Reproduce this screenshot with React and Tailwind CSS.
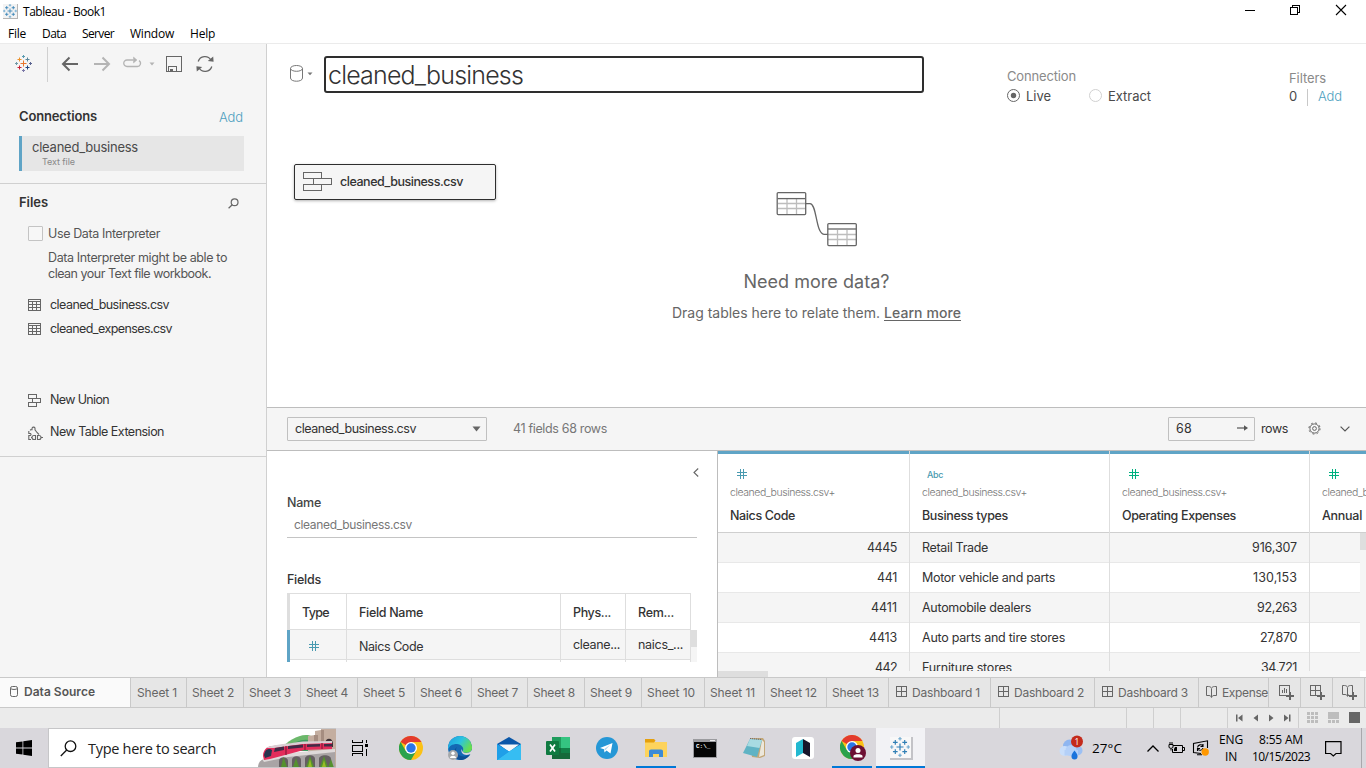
import React, { useLayoutEffect, useRef, useState } from 'react';

const SEGOE = "font-['Open_Sans','Noto_Sans',sans-serif]";

/* Single-line label whose letter spacing is computed so that it fills `w` pixels. */
function T({ w, className = '', children }) {
  const ref = useRef(null);
  const [ls, setLs] = useState(0);
  useLayoutEffect(() => {
    const natural = ref.current.getBoundingClientRect().width;
    setLs((w - natural) / String(children).length);
  }, []);
  return (
    <span ref={ref} className={`inline-block shrink-0 whitespace-pre ${className}`} style={{ letterSpacing: ls }}>
      {children}
    </span>
  );
}

function Plus({ x, y, r, c, s = 1 }) {
  return <path d={`M${x - r} ${y}H${x + r}M${x} ${y - r}V${y + r}`} stroke={c} strokeWidth={s} />;
}

function TableauMark({ size, mono, className = '' }) {
  const c = mono
    ? ['#2f7fb5', '#2f7fb5', '#2f7fb5', '#2f7fb5', '#2f7fb5', '#6ea9cf', '#6ea9cf', '#6ea9cf', '#6ea9cf']
    : ['#e8762c', '#eb912b', '#59879b', '#c72035', '#1f447e', '#5b9bb0', '#7199a6', '#7b78a8', '#5b6591'];
  return (
    <svg width={size} height={size} viewBox="0 0 17 17" fill="none" className={className}>
      <Plus x={8.5} y={8.5} r={3} c={c[0]} />
      <Plus x={4.5} y={4.5} r={2} c={c[1]} />
      <Plus x={12.5} y={4.5} r={2} c={c[2]} />
      <Plus x={4.5} y={12.5} r={2} c={c[3]} />
      <Plus x={12.5} y={12.5} r={2} c={c[4]} />
      <Plus x={8.5} y={1.5} r={1.5} c={c[5]} />
      <Plus x={1.5} y={8.5} r={1.5} c={c[6]} />
      <Plus x={8.5} y={15.5} r={1.5} c={c[7]} />
      <Plus x={15.5} y={8.5} r={1.5} c={c[8]} />
    </svg>
  );
}

function TitleBar() {
  return (
    <header className={`h-[43px] bg-white text-[12px] text-black ${SEGOE}`}>
      <div className="flex h-[24px] items-center">
        <div className="-mt-px ml-[3px] flex h-[15px] w-[15px] items-center justify-center border-r border-b border-[#b5b5b5] bg-[#f3f3f3]">
          <TableauMark size={14} mono />
        </div>
        <T w={83} className="ml-[5px]">Tableau - Book1</T>
        <svg width="110" height="22" viewBox="0 0 110 22" className="ml-auto mr-[14px] mt-[-2px]" fill="none" stroke="#000" shapeRendering="crispEdges">
          <path d="M3 10.500H13" />
          <path d="M48.500 7.500H55.500V14.500H48.500ZM50.500 7V5.500H57.500V12.500H56" />
          <path d="M94 5L104 15M104 5L94 15" shapeRendering="auto" strokeWidth="1.100" />
        </svg>
      </div>
      <nav className="flex h-5 items-center pl-2">
        <T w={18} className="mr-4">File</T>
        <T w={24} className="mr-4">Data</T>
        <T w={32} className="mr-4">Server</T>
        <T w={44} className="mr-4">Window</T>
        <T w={25}>Help</T>
      </nav>
    </header>
  );
}

function GridIcon() {
  return (
    <svg width="14" height="12" viewBox="0 0 14 12" fill="none" stroke="#666" shapeRendering="crispEdges">
      <path d="M.5 .5H12.5V11.5H.5ZM0 2.5H13M0 5.5H13M0 8.5H13M4.5 3V12M8.5 3V12" />
    </svg>
  );
}

function Sidebar() {
  return (
    <aside className="flex w-[267px] shrink-0 flex-col border-r border-[#d0d0d0] bg-[#f5f5f5] text-[12.5px] text-[#333]">
      <div className="flex h-[40px] items-center">
        <TableauMark size={17} className="-mt-px ml-[15px]" />
        <div className="ml-[15px] h-[35px] w-px bg-[#d0d0d0]" />
        <svg width="18" height="16" viewBox="0 0 18 16" fill="none" stroke="#666" strokeWidth="2" className="ml-[13px]">
          <path d="M17 8H2.5M8.5 1.5L2 8L8.5 14.5" />
        </svg>
        <svg width="18" height="16" viewBox="0 0 18 16" fill="none" stroke="#b4b4b4" strokeWidth="2" className="ml-[14px]">
          <path d="M1 8H15.5M9.5 1.5L16 8L9.5 14.5" />
        </svg>
        <svg width="20" height="14" viewBox="0 0 20 14" fill="none" stroke="#b4b4b4" strokeWidth="1.3" className="-mt-[2px] ml-[11px]">
          <path d="M11.500 4H5A3.200 3.200 0 0 0 5 10.500H15A3.200 3.200 0 0 0 17 4.600" />
          <path d="M11.500 1L15 4L11.500 7Z" fill="#b4b4b4" strokeWidth=".5" />
        </svg>
        <svg width="6" height="4" className="ml-[7px]"><path d="M.5 .5H5.5L3 3.5Z" fill="#b4b4b4" /></svg>
        <svg width="16" height="16" viewBox="0 0 16 16" fill="none" stroke="#666" shapeRendering="crispEdges" className="ml-[11px]">
          <path d="M.5 .5H15.5V15.5H.5ZM2.500 15V10.500H10.500V15" />
          <path d="M5.500 15V12.500" strokeWidth="3" />
        </svg>
        <svg width="18" height="18" viewBox="0 0 18 18" fill="none" stroke="#666" strokeWidth="1.300" className="ml-[14px] -mt-px">
          <path d="M2.200 6.500A7 7 0 0 1 15 5.200M15.800 11.500A7 7 0 0 1 3 12.800" />
          <path d="M11.800 6L17.600 6.800L17.200 1.600ZM6.200 12L.4 11.200L.8 16.400Z" fill="#666" stroke="none" />
        </svg>
      </div>

      <section className="h-[100px] border-b border-[#d0d0d0] px-[19px]">
        <div className="mt-[24px] flex h-[18px] items-center justify-between pr-[4px]">
          <T w={78} className="text-[13px] font-semibold">Connections</T>
          <T w={24} className="mt-[2px] text-[13px] font-light text-[#4e9fc0]">Add</T>
        </div>
        <div className="mt-[10px] flex h-[35px] w-[225px] flex-col items-start border-l-[3px] border-[#5fa4c6] bg-[#e6e6e6] pl-[10px] leading-none">
          <T w={106} className="mt-[4px] text-[13px] leading-[14px] text-[#4a4a4a]">cleaned_business</T>
          <T w={33} className="ml-[10px] mt-[3px] text-[9px] leading-[10px] text-[#888]">Text file</T>
        </div>
      </section>

      <section className="h-[273px] border-b border-[#d0d0d0]">
        <div className="mt-[10px] flex h-[18px] items-center justify-between pl-[19px] pr-[27px]">
          <T w={29} className="text-[13px] font-semibold">Files</T>
          <svg width="11" height="11" viewBox="0 0 11 11" fill="none" stroke="#666" strokeWidth="1.2">
            <circle cx="6.6" cy="4.2" r="3.4" /><path d="M4.2 6.7L.6 10.2" />
          </svg>
        </div>
        <div className="ml-[28px] mt-[14px] flex h-[16px] items-center text-[#555]">
          <div className="-mt-px h-[15px] w-[15px] rounded-[1px] border border-[#c4c4c4] bg-[#f7f7f7]" />
          <T w={112} className="ml-[5px]">Use Data Interpreter</T>
        </div>
        <div className="ml-[48px] mt-[8px] flex flex-col items-start leading-[16px] text-[#555]">
          <T w={179}>Data Interpreter might be able to</T>
          <T w={163}>clean your Text file workbook.</T>
        </div>
        <div className="ml-[28px] mt-[11px] flex flex-col">
          <div className="flex h-[24px] items-center"><GridIcon /><T w={119} className="ml-[8px]">cleaned_business.csv</T></div>
          <div className="flex h-[24px] items-center"><GridIcon /><T w={122} className="ml-[8px]">cleaned_expenses.csv</T></div>
        </div>
        <div className="ml-[28px] mt-[43px] flex flex-col">
          <div className="flex h-[32px] items-center">
            <svg width="14" height="13" viewBox="0 0 14 13" fill="none" stroke="#666" shapeRendering="crispEdges">
              <path d="M.5 .5H8.5V4.5H.5ZM4.5 4.5H12.5V8.5H4.5ZM.5 8.5H8.5V12.5H.5Z" />
            </svg>
            <T w={59} className="ml-[8px]">New Union</T>
          </div>
          <div className="flex h-[32px] items-center">
            <svg width="15" height="15" viewBox="0 0 15 15" fill="none" stroke="#666" strokeWidth="1.1" className="mt-[3px]">
              <path d="M2.5 4.5V3.8H4V2.5A1.6 1.6 0 0 1 7 2V3.8L9 6.5L11 8.5M.8 5V7.5H2.5A1.2 1.2 0 0 1 2.5 9.5H.8V13.5H3" />
              <path d="M4.5 11.5H3M7.5 9.5H6A2 2 0 0 0 6 13.5H7.5ZM9.5 9.5H11A2 2 0 0 1 11 13.5H9.5ZM13 11.5H15" />
            </svg>
            <T w={114} className="ml-[7px]">New Table Extension</T>
          </div>
        </div>
      </section>
    </aside>
  );
}

function Radio({ on }) {
  return on ? (
    <svg width="13" height="13" viewBox="0 0 13 13" fill="none" stroke="#666" className="-mt-[3px]"><circle cx="6.5" cy="6.5" r="6" /><circle cx="6.5" cy="6.5" r="2.7" fill="#666" stroke="none" /></svg>
  ) : (
    <svg width="13" height="13" viewBox="0 0 13 13" fill="none" stroke="#d0d0d0" className="-mt-[3px]"><circle cx="6.5" cy="6.5" r="6" /></svg>
  );
}

function Canvas() {
  return (
    <section className="flex h-[363px] flex-col bg-white">
      <div className="flex h-[76px] pt-[12px]">
        <svg width="14" height="17" viewBox="0 0 14 17" fill="none" stroke="#777" className="ml-[23px] mt-[9px]">
          <ellipse cx="6.5" cy="3.4" rx="6" ry="2.9" /><path d="M.5 3.5V13C.5 17.3 12.5 17.3 12.5 13V3.5" />
        </svg>
        <svg width="6" height="4" className="ml-[3px] mt-[16px]"><path d="M.5 .5H5.5L3 3.2Z" fill="#777" /></svg>
        <div className="ml-[11px] flex h-[37px] w-[600px] items-center rounded-[3px] border-2 border-[#2e2e2e] pl-[2px]">
          <T w={195} className="text-[25px] font-light leading-[30px] text-[#333]">cleaned_business</T>
        </div>
        <div className="ml-[83px] mt-[12px] w-[282px] text-[13px]">
          <T w={69} className="block! w-max leading-[16px] text-[#8a8a8a]">Connection</T>
          <div className="mt-[4px] flex h-[18px] items-center text-[#4a4a4a]">
            <Radio on />
            <T w={25} className="ml-[6px]">Live</T>
            <span className="w-[38px]" />
            <Radio />
            <T w={43} className="ml-[6px]">Extract</T>
          </div>
        </div>
        <div className="mt-[14px] text-[13px]">
          <T w={37} className="block! w-max leading-[16px] text-[#8a8a8a]">Filters</T>
          <div className="mt-[2px] flex h-[18px] items-center text-[#4a4a4a]">
            <T w={9}>0</T>
            <div className="ml-[9px] h-[17px] w-px bg-[#c8c8c8]" />
            <T w={24} className="ml-[10px] font-light text-[#4e9fc0]">Add</T>
          </div>
        </div>
      </div>

      <div className="grid flex-1 grid-cols-1 grid-rows-1">
        <div className="col-start-1 row-start-1 ml-[27px] mt-[44px] flex h-[36px] w-[202px] items-center rounded-[2px] border border-[#2e2e2e] bg-[#f5f5f5] pl-[8px] shadow-[0_1px_3px_rgba(0,0,0,0.3)]">
          <svg width="30" height="20" viewBox="0 0 30 20" fill="none" stroke="#666" shapeRendering="crispEdges">
            <path d="M.5 .5H18.5V6.5H.5ZM10.5 6.5H28.5V12.5H10.5ZM.5 12.5H18.5V18.5H.5Z" />
          </svg>
          <T w={123} className="ml-[7px] text-[12.5px] font-medium text-[#333]">cleaned_business.csv</T>
        </div>
        <div className="col-start-1 row-start-1 flex flex-col items-center self-start justify-self-center pt-[71px] text-[#666]">
          <svg width="82" height="56" viewBox="0 0 82 56" fill="none" stroke="#666" strokeWidth="1.3" className="ml-px">
            <path d="M2 12.5H30M2 17.5H30M11 8V24M20.5 8V24M52 43.5H80M52 48.5H80M61.5 39V54M71 39V54" stroke="#bdbdbd" />
            <rect x="1.2" y="1.6" width="28.5" height="22" rx="1" /><path d="M1.5 7.6H29.5" />
            <rect x="51.8" y="32.6" width="28.5" height="22" rx="1" /><path d="M52 38H80" />
            <path d="M30 12.6H34C41 12.6 39.5 42.6 48 43.3H52" />
          </svg>
          <T w={146} className="mt-[24px] text-[18px] leading-[22px]">Need more data?</T>
          <div className="mt-[11px] flex text-[14px] leading-[18px]">
            <T w={208}>Drag tables here to relate them.</T>
            <T w={77} className="ml-[4px] font-medium underline underline-offset-2">Learn more</T>
          </div>
        </div>
      </div>
    </section>
  );
}

function DataToolbar() {
  return (
    <div className="flex h-[44px] items-center border-y border-[#bdbdbd] bg-[#f5f5f5] text-[12.5px] text-[#333]">
      <div className="ml-[20px] flex h-[24px] w-[200px] items-center rounded-[1px] border border-[#c0c0c0] pl-[7px]">
        <T w={121}>cleaned_business.csv</T>
        <svg width="9" height="6" className="ml-auto mr-[5px]"><path d="M.5 .5H8.5L4.5 5.5Z" fill="#666" /></svg>
      </div>
      <T w={94} className="ml-[26px] text-[#777]">41 fields 68 rows</T>
      <div className="ml-auto flex h-[24px] w-[87px] items-center rounded-[1px] border border-[#c0c0c0] pl-[7px]">
        <T w={16}>68</T>
        <svg width="11" height="6" viewBox="0 0 11 6" className="ml-auto mr-[6px] -mt-[2px]"><path d="M0 3H8" stroke="#555" strokeWidth="1.2" /><path d="M7 .2L11 3L7 5.8Z" fill="#555" /></svg>
      </div>
      <T w={27} className="ml-[6px]">rows</T>
      <svg width="13" height="13" viewBox="0 0 13 13" fill="none" stroke="#666" className="-mt-px ml-[20px]">
        <circle cx="6.5" cy="6.5" r="4.6" /><circle cx="6.5" cy="6.5" r="1.9" />
        <circle cx="6.5" cy="6.5" r="5.6" strokeDasharray="1.9 2.5" />
      </svg>
      <svg width="10" height="6" viewBox="0 0 10 6" fill="none" stroke="#555" strokeWidth="1.2" className="ml-[19px] mr-[16px]"><path d="M.6 .6L5 5L9.4 .6" /></svg>
    </div>
  );
}

function Hash({ c }) {
  return (
    <svg width="10" height="10" viewBox="0 0 10 10" stroke={c} shapeRendering="crispEdges" className="shrink-0">
      <path d="M0 3.5H10M0 6.5H10M3.5 0V10M6.5 0V10" />
    </svg>
  );
}

function Details() {
  return (
    <section className="flex h-full w-[451px] shrink-0 flex-col border-r border-[#bdbdbd] bg-white pl-[20px] text-[12.5px] text-[#333]">
      <svg width="6" height="9" viewBox="0 0 6 9" fill="none" stroke="#666" strokeWidth="1.1" className="ml-[406px] mt-[17px]"><path d="M5.2 .5L1 4.5L5.2 8.5" /></svg>
      <T w={34} className="mt-[18px] self-start font-medium leading-[16px] text-[#444]">Name</T>
      <div className="mt-[3px] flex h-[24px] w-[410px] items-center border-b border-[#c4c4c4] pb-[2px] pl-[7px] text-[12px] text-[#777]">
        <T w={118}>cleaned_business.csv</T>
      </div>
      <T w={34} className="mt-[34px] self-start font-medium leading-[16px]">Fields</T>
      <div className="mt-[5px] flex h-[37px] w-[404px] items-center border border-l-[3px] border-[#dedede] font-medium [&>div]:flex [&>div]:h-full [&>div]:shrink-0 [&>div]:items-center [&>div]:border-r [&>div]:border-[#dedede] [&>div]:pl-[12px] [&>div]:pt-[3px]">
        <div className="w-[57px]"><T w={27}>Type</T></div>
        <div className="w-[214px]"><T w={64}>Field Name</T></div>
        <div className="w-[65px]"><T w={38}>Phys...</T></div>
        <div className="w-[64px] border-r-0!"><T w={36}>Rem...</T></div>
      </div>
      <div className="flex w-[410px]">
        <div className="h-[32px] w-[404px] border-l-[3px] border-[#5fa4c6]">
          <div className="flex h-[30px] border-b border-[#dedede] bg-[#f5f5f5] [&>div]:flex [&>div]:h-[32px] [&>div]:shrink-0 [&>div]:items-center [&>div]:border-r [&>div]:border-[#dedede] [&>div]:pl-[12px]">
            <div className="w-[57px]"><span className="ml-[7px]"><Hash c="#499ab0" /></span></div>
            <div className="w-[214px] pt-[2px]"><T w={64}>Naics Code</T></div>
            <div className="w-[65px] pb-[2px]"><T w={47}>cleane...</T></div>
            <div className="w-[65px] pb-[2px]"><T w={45}>naics_...</T></div>
          </div>
        </div>
        <div className="h-[32px] w-[6px] bg-[#f5f5f5]"><div className="h-[17px] bg-[#dedede]" /></div>
      </div>
    </section>
  );
}

const ROWS = [
  ['4445', 30, 'Retail Trade', 66, '916,307', 45],
  ['441', 20, 'Motor vehicle and parts', 133, '130,153', 44],
  ['4411', 26, 'Automobile dealers', 109, '92,263', 40],
  ['4413', 28, 'Auto parts and tire stores', 143, '27,870', 37],
  ['442', 22, 'Furniture stores', 90, '34,721', 36],
];

function Head({ className, kind, color, name, w, src = 105 }) {
  return (
    <div className={`flex h-[82px] shrink-0 flex-col items-start overflow-hidden border-t-[3px] border-b border-t-[#5fa4c6] border-b-[#cfcfcf] pl-[12px] ${className}`}>
      <div className="mt-[14px] flex h-[12px] items-center">
        {kind === 'abc' ? <T w={16} className="ml-[5px] mt-[2px] text-[9px] font-medium leading-[12px] text-[#499ab0]">Abc</T> : <span className="ml-[7px]"><Hash c={color} /></span>}
      </div>
      <T w={src} className="mt-[6px] text-[10.5px] font-light leading-[14px] text-[#777]">cleaned_business.csv+</T>
      <T w={w} className="mt-[7px] font-medium leading-[18px] text-[#333]">{name}</T>
    </div>
  );
}

function Preview() {
  return (
    <section className="flex min-w-0 flex-1 flex-col overflow-hidden bg-white text-[12.5px] text-[#333]">
      <div className="flex">
        <Head className="w-[191px]" color="#499ab0" name="Naics Code" w={65} />
        <div className="w-px bg-[#dedede]" />
        <Head className="w-[199px]" kind="abc" name="Business types" w={86} />
        <div className="w-px bg-[#dedede]" />
        <Head className="w-[199px]" color="#00b180" name="Operating Expenses" w={114} />
        <div className="w-px bg-[#dedede]" />
        <Head className="w-[56px]" color="#00b180" name="Annual" w={40} />
      </div>
      <div className="flex h-[138px]">
        <div className="w-[642px] overflow-hidden">
          {ROWS.map((r, i) => (
            <div key={i} className={`flex h-[30px] items-center border-b border-[#e8e8e8] [&>div]:flex [&>div]:h-[30px] [&>div]:shrink-0 [&>div]:items-center [&>div]:border-r [&>div]:border-[#dedede] [&>div]:pt-[2px] ${i % 2 ? 'bg-white' : 'bg-[#f5f5f5]'}`}>
              <div className="w-[192px] justify-end pr-[12px]"><T w={r[1]}>{r[0]}</T></div>
              <div className="w-[200px] pl-[12px]"><T w={r[3]}>{r[2]}</T></div>
              <div className="w-[200px] justify-end pr-[12px]"><T w={r[5]}>{r[4]}</T></div>
            </div>
          ))}
        </div>
        <div className="w-[6px] bg-[#f5f5f5]"><div className="h-[17px] bg-[#dedede]" /></div>
      </div>
      <div className="h-[6px] w-[642px] bg-[#f5f5f5]"><div className="h-full w-[50px] bg-[#dedede]" /></div>
    </section>
  );
}

const DashIcon = () => (
  <svg width="11" height="11" viewBox="0 0 11 11" fill="none" stroke="#666" shapeRendering="crispEdges"><path d="M.5 .5H10.5V10.5H.5ZM5.5 0V11M0 5.5H11" /></svg>
);
const BookIcon = () => (
  <svg width="12" height="12" viewBox="0 0 12 12" fill="none" stroke="#666"><path d="M5.500 2.500V11.500M.5 .5H2.500C4 .5 5 1.200 5.500 2.300C6 1.200 7 .5 8.500 .5H10.500V9.500H8C6.500 9.500 6 10.300 5.500 11.300C5 10.300 4.500 9.500 3 9.500H.5Z" /></svg>
);

const TABS = [
  ['Sheet 1', 40, 'w-[56px] pl-[6px]'],
  ['Sheet 2', 42, 'w-[57px] pl-[5px]'],
  ['Sheet 3', 42, 'w-[57px] pl-[5px]'],
  ['Sheet 4', 42, 'w-[57px] pl-[5px]'],
  ['Sheet 5', 42, 'w-[57px] pl-[5px]'],
  ['Sheet 6', 42, 'w-[57px] pl-[5px]'],
  ['Sheet 7', 41, 'w-[56px] pl-[5px]'],
  ['Sheet 8', 42, 'w-[57px] pl-[5px]'],
  ['Sheet 9', 42, 'w-[57px] pl-[5px]'],
  ['Sheet 10', 48, 'w-[63px] pl-[5px]'],
  ['Sheet 11', 45, 'w-[60px] pl-[5px]'],
  ['Sheet 12', 47, 'w-[62px] pl-[5px]'],
  ['Sheet 13', 47, 'w-[62px] pl-[5px]'],
  ['Dashboard 1', 68, 'w-[102px] pl-[7px]', 'dash'],
  ['Dashboard 2', 70, 'w-[104px] pl-[7px]', 'dash'],
  ['Dashboard 3', 70, 'w-[104px] pl-[7px]', 'dash'],
  ['Expense', 46, 'w-[70px] pl-[7px]', 'book'],
];

function Tabs() {
  return (
    <nav className="flex h-[31px] border-y border-[#c9c9c9] bg-[#e6e6e6] text-[12px] text-[#666] [&>div]:flex [&>div]:shrink-0 [&>div]:items-center [&>div]:border-r [&>div]:border-[#c9c9c9]">
      <div className="w-[131px] bg-[#fafafa] pb-[2px] pl-[10px]">
        <svg width="8" height="11" viewBox="0 0 8 11" fill="none" stroke="#666"><rect x=".5" y=".5" width="7" height="10" rx="1.8" /><path d="M.5 2.5C2 3.8 6 3.8 7.5 2.5" /></svg>
        <T w={71} className="ml-[6px] font-semibold text-[#555]">Data Source</T>
      </div>
      {TABS.map(([n, w, cls, icon]) => (
        <div key={n} className={cls}>
          {icon && <span className={`-mt-[2px] ${icon === 'dash' ? 'mr-[5px]' : 'mr-[4px]'}`}>{icon === 'dash' ? <DashIcon /> : <BookIcon />}</span>}
          <T w={w}>{n}</T>
        </div>
      ))}
      <div className="w-[32px] pl-[10px]">
        <svg width="15" height="15" viewBox="0 0 15 15" fill="none" stroke="#666" shapeRendering="crispEdges"><path d="M6.5 10.5H.5V.5H10.5V7M3.5 8V5M5.5 8V3M7.5 8V4" /><path d="M7 11H15M11 7V15" strokeWidth="2" /></svg>
      </div>
      <div className="w-[32px] pl-[9px]">
        <svg width="15" height="15" viewBox="0 0 15 15" fill="none" stroke="#666" shapeRendering="crispEdges"><path d="M6.5 10.5H.5V.5H10.5V7M5.5 1V10M1 5.5H10" /><path d="M7 11H15M11 7V15" strokeWidth="2" /></svg>
      </div>
      <div className="w-[32px] pl-[9px]">
        <svg width="15" height="15" viewBox="0 0 15 15" fill="none" stroke="#666"><path d="M5.500 2.500V11.500M6.500 9.500V11M10.500 7V.5H8.500C7 .5 6 1.200 5.500 2.300C5 1.200 4 .5 2.500 .5H.5V9.500H3C4.500 9.500 5 10.300 5.500 11.300" /><path d="M7 11H15M11 7V15" strokeWidth="2" /></svg>
      </div>
    </nav>
  );
}

function StatusBar() {
  return (
    <div className="flex h-[20px] bg-[#ebebeb] [&>div]:flex [&>div]:shrink-0 [&>div]:items-center [&>div]:border-l [&>div]:border-[#cfcfcf]">
      <span className="w-[999px]" />
      <div className="w-[127px]" />
      <div className="w-[27px]" />
      <div className="w-[27px]" />
      <div className="w-[47px]" />
      <div className="w-[71px] pl-[8px]">
        <svg width="56" height="8" viewBox="0 0 56 8" fill="#666" className="-mt-px">
          <path d="M0 .5H1.5V7.5H0ZM6.5 .5V7.5L2 4ZM22 .5V7.5L17.5 4ZM33 .5V7.5L37.5 4ZM48 .5V7.5L52.5 4ZM53 .5H54.5V7.5H53Z" />
        </svg>
      </div>
      <div className="w-[68px] pl-[8px]">
        <svg width="55" height="11" viewBox="0 0 55 11" fill="#bdbdbd" shapeRendering="crispEdges" className="-mt-px">
          <path d="M0 0h3v3H0zM4 0h3v3H4zM8 0h3v3H8zM0 4h3v3H0zM4 4h3v3H4zM8 4h3v3H8zM0 8h3v3H0zM4 8h3v3H4zM8 8h3v3H8zM21 0h11v7H21zM21 8h3v3h-3zM25 8h3v3h-3zM29 8h3v3h-3z" />
          <rect x="42" width="11" height="11" fill="#666" />
        </svg>
      </div>
    </div>
  );
}

function Monorail() {
  return (
    <svg width="78" height="39" viewBox="0 0 78 39">
      <path d="M22 20C30 12 40 5 50 6L60 9V22H22Z" fill="#6cb86b" />
      <path d="M30 18C38 12 46 9 54 12V22H30Z" fill="#3f9a62" />
      <path d="M50 17V7L57 6V2L63 1V0H78V39H62L50 24Z" fill="#c4aea0" />
      <path d="M56 6H60V18H56ZM63 1H66V16H63Z" fill="#a58d80" />
      <path d="M67 15C67 8 75 8 75 15V18H67Z" fill="#3c3235" />
      <path d="M0 39C0 33 3 30 8 30L30 25L77 21V39Z" fill="#a9a4a5" />
      <path d="M4 30L30 24L77 20V23L30 28L6 33Z" fill="#ded9d9" />
      <g fill="#655f62">
        <path d="M21 39V32C21 27 30 27 30 32V39ZM34 39V31C34 26 43 26 43 31V39ZM47 39V30C47 25 57 25 57 30V39ZM61 39V30C61 25 73 25 73 30V39Z" />
      </g>
      <path d="M25.500 28L23 38H29ZM38 29L35 38H41ZM52 27L48 38H56ZM66 27L62 38H70ZM73 30L70 39H76Z" fill="#55912e" />
      <path d="M52 30L50 38H54ZM66 31L64 38H68Z" fill="#97bd24" />
      <path d="M5 27C5 21 9 17 15 17L45 13L74 13V20L46 21L12 30L6 31Z" fill="#e32d5b" />
      <path d="M8 19C12 16 28 15 45 12.500L74 12V14L45 15L16 19Z" fill="#d9cfd3" />
      <path d="M6 26C7 22 8 20 12 20L14 21L13 27L7 29Z" fill="#26354f" />
      <path d="M17 19L26 17.500V21L16 23ZM30 17L45 15.500V18.500L30 20ZM49 15.500L62 15V17.500L49 18ZM66 15H74V17.500H66Z" fill="#412b46" />
      <path d="M28 17V26M47 15V21M64 14V20" stroke="#8f1b3b" strokeWidth="1.300" />
    </svg>
  );
}

function ChromeArt() {
  return (
    <>
      <circle cx="12" cy="12" r="12" fill="#fbc116" />
      <path d="M12 12L1.600 6A12 12 0 0 1 22.400 6H12Z" fill="#e33b2e" />
      <path d="M1.600 6A12 12 0 0 0 12 24L17.200 15L12 12L6.800 15Z" fill="#2ba24c" />
      <circle cx="12" cy="12" r="6" fill="#fff" />
      <circle cx="12" cy="12" r="4.700" fill="#2a76e8" />
    </>
  );
}

function Slot({ children, bar, active }) {
  return (
    <div className={`flex h-[40px] w-[49px] shrink-0 flex-col items-center ${active ? 'bg-[#f2f2f5]' : ''}`}>
      <div className="flex h-[38px] items-center pt-[2px]">{children}</div>
      {bar && <div className={`h-[2px] bg-[#0078d7] ${active ? 'w-full' : 'w-[40px]'}`} />}
    </div>
  );
}

function Taskbar() {
  return (
    <footer className={`flex h-[40px] bg-[#d9d7dc] text-black ${SEGOE}`}>
      <div className="flex w-[48px] items-center justify-center">
        <svg width="16" height="16" viewBox="0 0 16 16"><path d="M0 2.300L6.500 1.400V7.600H0ZM7.300 1.300L16 0V7.600H7.300ZM0 8.400H6.500V14.600L0 13.700ZM7.300 8.400H16V16L7.300 14.700Z" /></svg>
      </div>
      <div className="flex w-[288px] items-center overflow-hidden border border-r-0 border-[#c6c6c8] bg-white">
        <svg width="17" height="17" viewBox="0 0 17 17" fill="none" stroke="#111" strokeWidth="1.300" className="ml-[11px]"><circle cx="10.500" cy="6.200" r="5.300" /><path d="M6.700 10L.8 16" /></svg>
        <T w={128} className="ml-[11px] mt-px text-[14.5px] text-[#222]">Type here to search</T>
        <div className="-mb-px ml-auto self-end"><Monorail /></div>
      </div>
      <div className="flex w-[50px] items-center justify-center pr-[2px]">
        <svg width="17" height="16" viewBox="0 0 17 16" fill="none" stroke="#000" shapeRendering="crispEdges"><path d="M0 2.500H11M.5 0V3M10.500 0V3M.5 5.500H10.500V11.500H.5ZM0 13.500H11M.5 13V16M10.500 13V16M14.500 0V3M14.500 9V16" /><path d="M13 4H16V7H13Z" fill="#000" stroke="none" /></svg>
      </div>
      <Slot><svg width="24" height="24" viewBox="0 0 24 24"><ChromeArt /></svg></Slot>
      <Slot>
        <svg width="24" height="24" viewBox="0 0 24 24">
          <defs>
            <linearGradient id="edge" x1="0" x2="1" y1="0" y2=".5"><stop offset="0" stopColor="#1d9be0" /><stop offset=".55" stopColor="#2cc3e0" /><stop offset="1" stopColor="#67dd52" /></linearGradient>
          </defs>
          <circle cx="12" cy="12" r="12" fill="#1468b4" />
          <path d="M0 12A12 12 0 0 1 24 12C24 17 17 18 14.500 15.500C17 12 13 8 9 8C4 8 1 10 0 14Z" fill="url(#edge)" />
          <path d="M9 11C6 15 10 21 17 20.500L22 18.500C20 22 16 24 12 24C5 23 4 14 9 11Z" fill="#0d4f94" />
          <path d="M13.500 13C12.500 18 17 20.500 22.500 18L24 18.500V14C22 17.500 17 18 14.500 15.500Z" fill="#d9d7dc" />
          <circle cx="5" cy="19" r="5" fill="#a5a8ab" /><circle cx="5" cy="17.200" r="1.700" fill="#fff" /><path d="M2 22C2 19 8 19 8 22Z" fill="#fff" />
        </svg>
      </Slot>
      <Slot>
        <svg width="24" height="23" viewBox="0 0 24 23"><path d="M0 7L12 0L24 7V23H0Z" fill="#0a56a8" /><path d="M2 7.500H22L12 15Z" fill="#f4f6f8" /><path d="M0 7L12 14.500L24 23H0Z" fill="#1d94e4" /><path d="M24 7L12 14.500L0 23H24Z" fill="#36bdf2" /><path d="M0 7L12 14.500L0 23Z" fill="#1f9fe8" /></svg>
      </Slot>
      <Slot>
        <svg width="24" height="22" viewBox="0 0 24 22"><rect x="6" width="9" height="22" fill="#1f9b5c" /><rect x="15" width="9" height="11" fill="#35c481" /><rect x="6" y="11" width="18" height="11" fill="#16693b" /><rect x="15" y="11" width="9" height="5" fill="#128048" /><rect y="4" width="13" height="14" rx="1" fill="#0f7a41" /><path d="M4 7.500L9 14.500M9 7.500L4 14.500" stroke="#fff" strokeWidth="1.700" /></svg>
      </Slot>
      <Slot>
        <svg width="22" height="22" viewBox="0 0 22 22"><circle cx="11" cy="11" r="11" fill="#2597d6" /><path d="M4 11L16.500 6L14.500 16.500L10.500 13.500L8.500 15.500L8 12.300Z" fill="#fff" /><path d="M8 12.300L14 8L9.500 13Z" fill="#a9d2ea" /></svg>
      </Slot>
      <Slot bar>
        <svg width="22" height="19" viewBox="0 0 22 19"><path d="M0 1H8L10 3H22V18H0Z" fill="#fdd35c" /><path d="M0 0H9L10.500 1.500L9 3.500H0Z" fill="#e5a00f" /><path d="M4 18V12Q4 10.500 6 10.500H16Q18 10.500 18 12V18H14V15H8V18Z" fill="#3b8bd8" /></svg>
      </Slot>
      <Slot>
        <svg width="24" height="19" viewBox="0 0 24 19"><rect width="24" height="19" fill="#9b9b9f" /><rect x="1" y="3" width="22" height="15" fill="#050505" /><path d="M17 1.500H22" stroke="#eee" /><text x="3" y="9" fontSize="6" fontFamily="Liberation Mono" fontWeight="bold" fill="#fff">C:\_</text></svg>
      </Slot>
      <Slot>
        <svg width="24" height="22" viewBox="0 0 24 22"><path d="M8 1H21L23 4V19L18 21L10 20Z" fill="#c3a777" /><path d="M20 3L22 5V18L17 20Z" fill="#ece7db" /><path d="M8 2L20 3L15 20L1 16Z" fill="#5fb3c4" /><path d="M8 2L20 3L17.500 11L5 9Z" fill="#a7dbe2" /><path d="M8 1.500L20 2.500" stroke="#667" strokeDasharray="1 1" /></svg>
      </Slot>
      <Slot>
        <svg width="22" height="22" viewBox="0 0 22 22"><rect width="22" height="22" rx="3" fill="#fff" /><path d="M4 6L11 2V16L4 20Z" fill="#22b8d0" /><path d="M11 2L18 6V20L11 16Z" fill="#17152b" /></svg>
      </Slot>
      <Slot bar>
        <svg width="26" height="26" viewBox="0 0 26 26" className="ml-[2px]">
          <ChromeArt />
          <circle cx="18" cy="18" r="8" fill="#6d1033" /><circle cx="18" cy="15.500" r="2.500" fill="#fff" /><path d="M13.500 22.500V21C13.500 18.500 22.500 18.500 22.500 21V22.500Z" fill="#fff" />
        </svg>
      </Slot>
      <Slot bar active>
        <div className="ml-px flex h-[23px] w-[23px] items-center justify-center border-r-2 border-b-2 border-[#c3c3c7] bg-[#f8f8f8]"><TableauMark size={20} mono /></div>
      </Slot>

      <div className="ml-auto flex items-center">
        <svg width="26" height="26" viewBox="0 0 26 26">
          <circle cx="10.500" cy="11" r="6.500" fill="#8fb6f0" />
          <circle cx="5.500" cy="16" r="5" fill="#c9defa" /><circle cx="18.500" cy="15.500" r="5" fill="#9cc0f4" /><circle cx="12" cy="15.500" r="5.500" fill="#b4d0f8" />
          <path d="M5.500 15H19V20.500H5.500Z" fill="#b4d0f8" />
          <path d="M15.500 15.500C18 18.500 18.500 20 18.500 21.500A3 3 0 0 1 12.500 21.500C12.500 20 13 18.500 15.500 15.500Z" fill="#1a73dc" />
          <circle cx="18" cy="6.500" r="6" fill="#c42b1c" /><text x="18" y="9.600" textAnchor="middle" fontSize="8.500" fontFamily="Open Sans" fill="#fff">1</text>
        </svg>
        <T w={30} className="ml-[7px] text-[13.5px]">27°C</T>
        <svg width="12" height="7" viewBox="0 0 12 7" fill="none" stroke="#000" strokeWidth="1.300" className="ml-[25px]"><path d="M.5 6.500L6 1L11.500 6.500" /></svg>
        <svg width="17" height="12" viewBox="0 0 17 12" fill="none" stroke="#000" className="ml-[9px]"><path d="M5 3.500H14.500V10.500H4.500V7M15 5.500H16.500V8.500H15" /><path d="M1 2.500H5V5.500Q3 7.500 1 5.500ZM2 0V2.500M4 0V2.500M3 7V8.500" /><path d="M7 5H9V9H6V7Z" fill="#000" stroke="none" /></svg>
        <svg width="18" height="16" viewBox="0 0 18 16" fill="none" stroke="#000" strokeWidth="1.100" className="ml-[7px]"><path d="M9 13.500L1.500 12.500V3.500L15.500 .8V8M5 14.800H10" /><path d="M5.500 7.500C6 4.500 9.500 4 11 6M11 4V6.500H8.500M11 8C10.500 10.500 7 11 5.500 9M5.500 11V8.500H8" /><circle cx="13.200" cy="12" r="3.700" fill="#ff9800" stroke="none" /></svg>
        <div className="ml-[8px] flex w-[26px] flex-col items-center text-[12px] leading-[17px]"><T w={24}>ENG</T><T w={12}>IN</T></div>
        <div className="ml-[7px] flex w-[60px] flex-col items-center text-[12px] leading-[17px]"><T w={44}>8:55 AM</T><T w={58}>10/15/2023</T></div>
        <svg width="17" height="16" viewBox="0 0 17 16" fill="none" stroke="#000" strokeWidth="1.200" className="ml-[14px] mt-[1px]"><path d="M.6 .6H16V12.500H11L8.300 15L5.600 12.500H.6Z" /></svg>
        <div className="ml-[19px] mr-[4px] h-[40px] w-px bg-[#a9a8ac]" />
      </div>
    </footer>
  );
}

export default function App() {
  return (
    <div className="flex h-[768px] w-[1366px] flex-col overflow-hidden bg-white font-[Inter,Roboto,sans-serif]">
      <TitleBar />
      <div className="flex h-[634px] border-t border-[#ebebeb]">
        <Sidebar />
        <main className="flex min-w-0 flex-1 flex-col">
          <Canvas />
          <DataToolbar />
          <div className="flex h-[226px]">
            <Details />
            <Preview />
          </div>
        </main>
      </div>
      <Tabs />
      <StatusBar />
      <Taskbar />
    </div>
  );
}
